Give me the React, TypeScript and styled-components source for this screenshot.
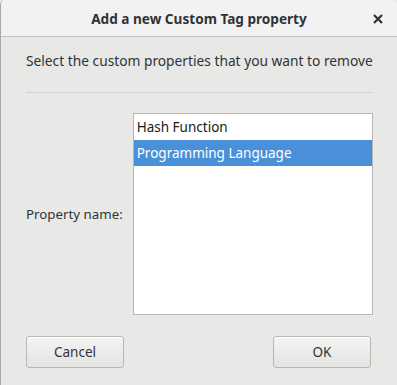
import React from "react";
import styled, { createGlobalStyle } from "styled-components";

const Global = createGlobalStyle`
  html, body { margin: 0; padding: 0; background: #e8e8e7; }
  body { font-family: "Noto Sans", "DejaVu Sans", sans-serif; }
`;

const Window = styled.div`
  width: 397px;
  height: 385px;
  box-sizing: border-box;
  background: #e8e8e7;
  border-left: 1px solid #a9a9a9;
  border-top-left-radius: 5px;
  border-top-right-radius: 5px;
  overflow: hidden;
  display: flex;
  flex-direction: column;
  color: #2e3436;
`;

const TitleBar = styled.div`
  height: 37px;
  box-sizing: border-box;
  background: #f2f2f2;
  border-bottom: 1px solid #c0c0bd;
  display: flex;
  align-items: center;
  justify-content: center;
  position: relative;
`;

const Title = styled.div`
  font-size: 13.6px;
  font-weight: 700;
  color: #2e3436;
`;

const Close = styled.div`
  position: absolute;
  right: 12px;
  top: 12px;
  width: 14px;
  height: 14px;
  display: flex;
  align-items: center;
  justify-content: center;
`;

const Body = styled.div`
  flex: 1;
  display: flex;
  flex-direction: column;
  padding: 14px 25px 0 25px;
`;

const Subtitle = styled.div`
  font-size: 13.75px;
  color: #2e3436;
  line-height: 18px;
  padding-top: 1px;
  white-space: nowrap;
`;

const Separator = styled.div`
  height: 1px;
  background: #d1d1cf;
  margin-top: 22px;
`;

const FormRow = styled.div`
  display: flex;
  align-items: center;
  margin-top: 20px;
  gap: 10px;
`;

const Label = styled.div`
  flex: 1;
  text-align: right;
  white-space: nowrap;
  font-size: 13.3px;
  color: #2e3436;
`;

const ListBox = styled.div`
  width: 240px;
  height: 202px;
  flex-shrink: 0;
  box-sizing: border-box;
  background: #ffffff;
  border: 1px solid #b6b6b3;
  display: flex;
  flex-direction: column;
`;

const Item = styled.div<{ $selected?: boolean }>`
  height: 26px;
  line-height: 26px;
  padding-left: 3px;
  font-size: 13.5px;
  color: ${(p) => (p.$selected ? "#ffffff" : "#1a1a1a")};
  background: ${(p) => (p.$selected ? "#4a90d9" : "transparent")};
`;

const Buttons = styled.div`
  display: flex;
  justify-content: space-between;
  margin-top: 21px;
  padding-right: 1px;
`;

const Button = styled.button`
  width: 98px;
  height: 32px;
  box-sizing: border-box;
  border: 1px solid #b6b6b3;
  border-radius: 3px;
  background: linear-gradient(to bottom, #f4f4f4, #e3e3e2);
  box-shadow: inset 0 1px #ffffff;
  font-family: inherit;
  font-size: 13.5px;
  color: #2e3436;
  padding: 0;
`;

export default function App() {
  return (
    <>
      <Global />
      <Window>
        <TitleBar>
          <Title>Add a new Custom Tag property</Title>
          <Close>
            <svg width="10" height="10" viewBox="0 0 10 10">
              <path d="M1 1 L9 9 M9 1 L1 9" stroke="#2e3436" strokeWidth="2.2" strokeLinecap="butt" />
            </svg>
          </Close>
        </TitleBar>
        <Body>
          <Subtitle>Select the custom properties that you want to remove</Subtitle>
          <Separator />
          <FormRow>
            <Label>Property name:</Label>
            <ListBox>
              <Item>Hash Function</Item>
              <Item $selected>Programming Language</Item>
            </ListBox>
          </FormRow>
          <Buttons>
            <Button>Cancel</Button>
            <Button>OK</Button>
          </Buttons>
        </Body>
      </Window>
    </>
  );
}
